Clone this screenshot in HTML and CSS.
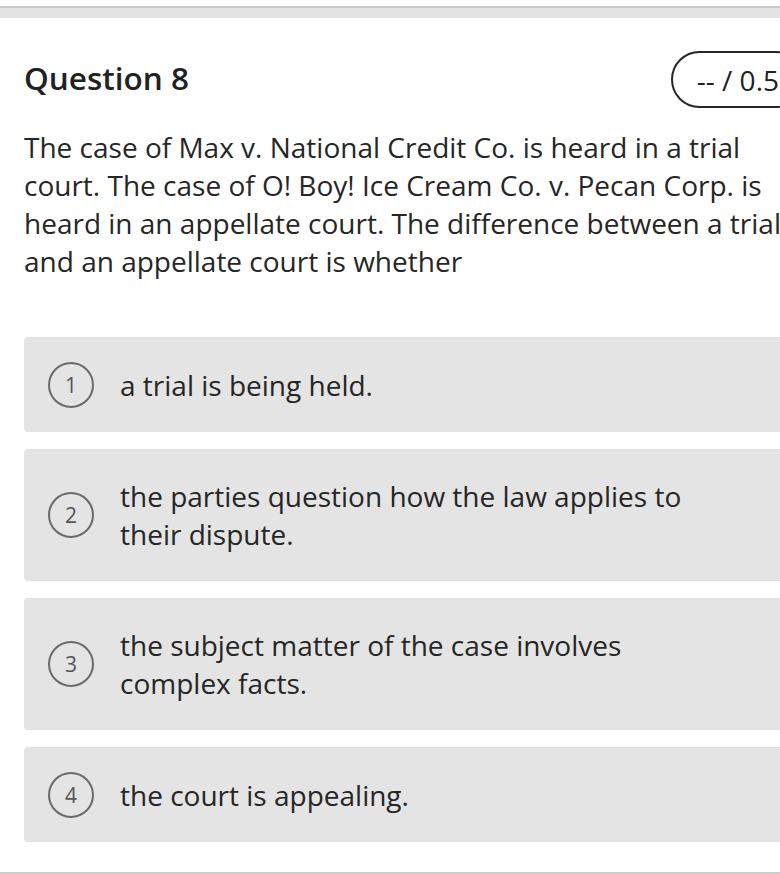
FILE: index.html
```html
<!DOCTYPE html>
<html lang="en">
<head>
<meta charset="utf-8">
<title>Question 8</title>
<link rel="stylesheet" href="styles.css">
</head>
<body>
<div class="topbar"></div>
<main class="question">
  <header class="q-header">
    <h1 class="q-title">Question 8</h1>
    <div class="q-score">-- / 0.5</div>
  </header>
  <p class="q-text">The case of Max v. National Credit Co. is heard in a trial court. The case of O! Boy! Ice Cream Co. v. Pecan Corp. is heard in an appellate court. The difference between a trial and an appellate court is whether</p>
  <ol class="options">
    <li class="option"><span class="num">1</span><span class="opt-text">a trial is being held.</span></li>
    <li class="option"><span class="num">2</span><span class="opt-text">the parties question how the law applies to their dispute.</span></li>
    <li class="option"><span class="num">3</span><span class="opt-text">the subject matter of the case involves complex facts.</span></li>
    <li class="option"><span class="num">4</span><span class="opt-text">the court is appealing.</span></li>
  </ol>
</main>
<div class="bottomline"></div>
</body>
</html>
```

FILE: styles.css
```css
html, body {
  margin: 0;
  padding: 0;
  background: #ffffff;
  overflow: hidden;
}
body {
  width: 780px;
  height: 874px;
  font-family: "Open Sans", "Liberation Sans", sans-serif;
  color: #262626;
  position: relative;
}
.topbar {
  margin-top: 6px;
  height: 10px;
  border-top: 2px solid #c9c9c9;
  background: #e3e3e3;
}
.question {
  width: 780px;
  margin-left: 24px;
  padding-top: 33px;
}
.q-header {
  display: flex;
  justify-content: space-between;
  align-items: center;
  height: 57px;
}
.q-title {
  margin: 0;
  padding-bottom: 4px;
  font-size: 31.5px;
  font-weight: 600;
  color: #222;
}
.q-score {
  box-sizing: border-box;
  height: 57px;
  padding: 0 23px 0 24px;
  border: 2px solid #262626;
  border-radius: 29px;
  display: flex;
  align-items: center;
  font-size: 28px;
  color: #222;
}
.q-text {
  margin: 20px 0 0 0;
  font-size: 28px;
  line-height: 38px;
  color: #262626;
}
.options {
  list-style: none;
  margin: 57px 0 0 0;
  padding: 0;
  display: flex;
  flex-direction: column;
  gap: 17px;
}
.option {
  background: #e4e4e4;
  border-radius: 4px;
  padding: 28px 24px;
  display: flex;
  align-items: center;
  gap: 26px;
}
.num {
  flex: none;
  box-sizing: border-box;
  width: 46px;
  height: 46px;
  margin: -4px 0;
  border: 2px solid #6a6a6a;
  border-radius: 50%;
  display: flex;
  align-items: center;
  justify-content: center;
  font-size: 21px;
  color: #555;
}
.opt-text {
  font-size: 28px;
  line-height: 38px;
  min-height: 39px;
  display: flex;
  align-items: center;
  max-width: 600px;
}
.bottomline {
  position: absolute;
  left: 0;
  right: 0;
  top: 872px;
  height: 2px;
  background: #cccccc;
}
```
